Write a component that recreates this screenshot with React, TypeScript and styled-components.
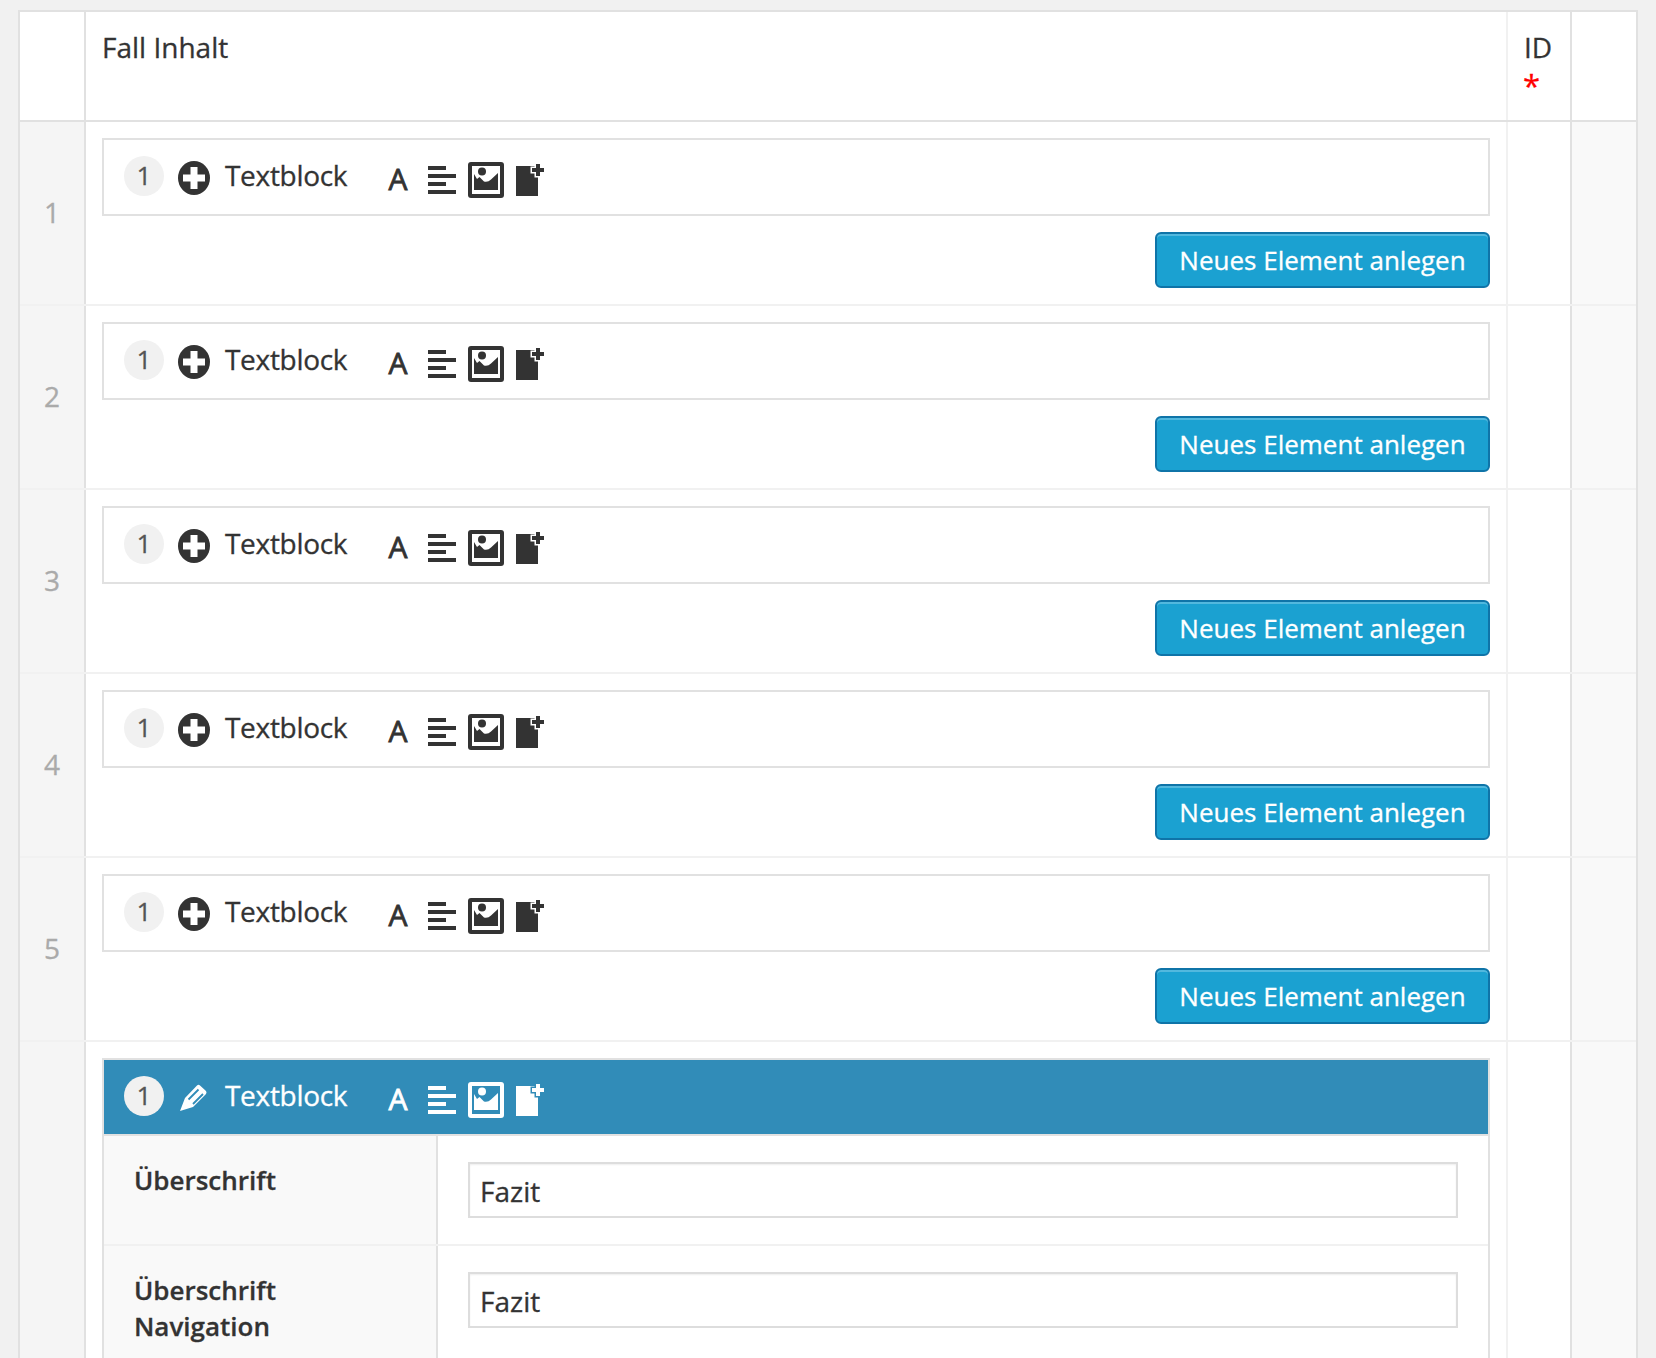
import styled, { createGlobalStyle } from "styled-components";

const rows = [1, 2, 3, 4, 5];

const GlobalStyle = createGlobalStyle`
  html, body {
    margin: 0;
    height: 1358px;
    overflow: hidden;
    background: #f1f1f1;
  }
  body {
    font-family: "Open Sans", "Liberation Sans", sans-serif;
    color: #333;
    -webkit-text-stroke: 0.3px;
  }
  * {
    box-sizing: border-box;
  }
`;

function PlusIcon() {
  return (
    <svg width="32" height="34" viewBox="0 0 32 34">
      <ellipse cx="16" cy="17" rx="16" ry="17" fill="#333" />
      <path d="M12.500 6h7v7.500H27v7h-7.500V28h-7v-7.500H5v-7h7.500z" fill="#fff" />
    </svg>
  );
}

function PencilIcon() {
  return (
    <svg width="32" height="34" viewBox="0 0 32 34">
      <path d="M2 30l5-13L19 4.500q1.500-1.500 3 0l6 5.500q1 1.500 0 3L15 26z" fill="#fff" />
      <path
        d="M10.500 18.500l10-10M15 23l10-10"
        stroke="#318cb8"
        strokeWidth="1.800"
        fill="none"
      />
    </svg>
  );
}

function LinesIcon({ color }: { color: string }) {
  return (
    <svg width="28" height="28" viewBox="0 0 28 28" fill={color}>
      <rect x="0" y="0" width="18" height="4" />
      <rect x="0" y="8" width="28" height="4" />
      <rect x="0" y="16" width="18" height="4" />
      <rect x="0" y="24" width="28" height="4" />
    </svg>
  );
}

function ImageIcon({ color, bg }: { color: string; bg: string }) {
  return (
    <svg width="36" height="36" viewBox="0 0 36 36">
      <rect width="36" height="36" rx="3" fill={color} />
      <rect x="4" y="4" width="28" height="28" fill={bg} />
      <circle cx="14" cy="9.500" r="4" fill={color} />
      <path d="M6 12l3 5 2.500-2 4.500 4.500q4 1 7-2L30 11v17H6z" fill={color} />
    </svg>
  );
}

function NoteIcon({ color, bg }: { color: string; bg: string }) {
  return (
    <svg width="28" height="32" viewBox="0 0 28 32">
      <rect x="0" y="2" width="22" height="30" fill={color} />
      <path
        d="M20 0h4v4h4v4h-4v4h-4V8h-4V4h4z"
        fill={color}
        stroke={bg}
        strokeWidth="3"
        paintOrder="stroke"
      />
    </svg>
  );
}

function BlockHeader({ active }: { active?: boolean }) {
  const color = active ? "#fff" : "#333";
  const bg = active ? "#318cb8" : "#fff";
  return (
    <HeaderBar $active={active}>
      <Count>1</Count>
      <StateIcon>{active ? <PencilIcon /> : <PlusIcon />}</StateIcon>
      <BlockTitle>Textblock</BlockTitle>
      <LetterIcon>A</LetterIcon>
      <Tools>
        <LinesIcon color={color} />
        <ImageIcon color={color} bg={bg} />
        <NoteIcon color={color} bg={bg} />
      </Tools>
    </HeaderBar>
  );
}

export default function App() {
  return (
    <>
      <GlobalStyle />
      <Table>
        <HeadRow>
          <HeadCell $rule="#e1e1e1" />
          <HeadCell $rule="#f1f1f1">Fall Inhalt</HeadCell>
          <HeadCell $rule="#e1e1e1">
            ID
            <Required>*</Required>
          </HeadCell>
          <HeadCell />
        </HeadRow>
        {rows.map((n) => (
          <Row key={n}>
            <NumberCell>{n}</NumberCell>
            <ContentCell>
              <Block>
                <BlockHeader />
              </Block>
              <ButtonRow>
                <AddButton>Neues Element anlegen</AddButton>
              </ButtonRow>
            </ContentCell>
            <IdCell />
            <SideCell />
          </Row>
        ))}
        <Row $last>
          <NumberCell />
          <ContentCell>
            <Block>
              <BlockHeader active />
              <Field>
                <FieldLabel>Überschrift</FieldLabel>
                <FieldValue>
                  <TextInput defaultValue="Fazit" />
                </FieldValue>
              </Field>
              <Field>
                <FieldLabel>
                  Überschrift
                  <br />
                  Navigation
                </FieldLabel>
                <FieldValue>
                  <TextInput defaultValue="Fazit" />
                </FieldValue>
              </Field>
            </Block>
          </ContentCell>
          <IdCell />
          <SideCell />
        </Row>
      </Table>
    </>
  );
}

const Table = styled.div`
  width: 1620px;
  margin: 10px 0 0 18px;
  background: #fff;
  border: 2px solid #e1e1e1;
`;

const HeadRow = styled.div`
  display: grid;
  grid-template-columns: 66px 1422px 64px 64px;
  border-bottom: 2px solid #e1e1e1;
`;

const HeadCell = styled.div<{ $rule?: string }>`
  height: 108px;
  padding: 17px 16px 19px;
  font-size: 28px;
  line-height: 36px;
  color: #333;
  border-right: ${(p) => (p.$rule ? `2px solid ${p.$rule}` : "0")};
`;

const Required = styled.div`
  margin: 2px 0 0 -1px;
  color: #f00;
  font-size: 31px;
`;

const Row = styled.div<{ $last?: boolean }>`
  display: grid;
  grid-template-columns: 66px 1422px 64px 64px;
  border-bottom: ${(p) => (p.$last ? "0" : "2px solid #f1f1f1")};
`;

const NumberCell = styled.div`
  display: flex;
  align-items: center;
  justify-content: center;
  padding-bottom: 2px;
  background: #f5f5f5;
  border-right: 2px solid #e1e1e1;
  font-size: 28px;
  color: #aaa;
`;

const ContentCell = styled.div`
  padding: 16px;
  border-right: 2px solid #f1f1f1;
`;

const IdCell = styled.div`
  border-right: 2px solid #e1e1e1;
`;

const SideCell = styled.div`
  background: #f9f9f9;
`;

const Block = styled.div`
  border: 2px solid #e1e1e1;
`;

const HeaderBar = styled.div<{ $active?: boolean }>`
  display: flex;
  align-items: flex-start;
  height: 74px;
  padding: 16px 0 0 20px;
  background: ${(p) => (p.$active ? "#318cb8" : "#fff")};
  color: ${(p) => (p.$active ? "#fff" : "#333")};
`;

const Count = styled.span`
  flex: none;
  width: 40px;
  height: 40px;
  border-radius: 50%;
  background: #f1f1f1;
  color: #555;
  font-size: 26px;
  line-height: 38px;
  text-align: center;
`;

const StateIcon = styled.span`
  flex: none;
  width: 32px;
  height: 34px;
  margin: 5px 0 0 14px;
  svg {
    display: block;
  }
`;

const BlockTitle = styled.span`
  flex: none;
  width: 122px;
  margin: 1px 0 0 15px;
  font-size: 28px;
  line-height: 36px;
  letter-spacing: -0.3px;
`;

const LetterIcon = styled.span`
  flex: none;
  width: 20px;
  margin: 3px 0 0 41px;
  font-size: 30px;
  font-weight: 400;
  -webkit-text-stroke: 0.8px;
  line-height: 40px;
  text-align: center;
`;

const Tools = styled.span`
  display: flex;
  align-items: center;
  gap: 12px;
  margin: 6px 0 0 20px;
  svg {
    display: block;
  }
`;

const ButtonRow = styled.div`
  display: flex;
  justify-content: flex-end;
  margin-top: 16px;
`;

const AddButton = styled.button`
  height: 56px;
  width: 335px;
  padding: 0;
  border: 2px solid #0f74a8;
  border-radius: 6px;
  background: #1ba1d1;
  box-shadow: inset 0 2px 0 rgba(120, 200, 230, 0.6);
  color: #fff;
  font-family: inherit;
  font-size: 26px;
`;

const Field = styled.div`
  display: grid;
  grid-template-columns: 334px 1fr;
  border-top: 2px solid #e1e1e1;
  & + & {
    border-top-color: #f1f1f1;
  }
`;

const FieldLabel = styled.div`
  padding: 26px 30px;
  background: #f9f9f9;
  border-right: 2px solid #e1e1e1;
  font-size: 26px;
  font-weight: 600;
  line-height: 36px;
`;

const FieldValue = styled.div`
  padding: 26px 30px;
`;

const TextInput = styled.input`
  display: block;
  width: 100%;
  height: 56px;
  padding: 2px 10px 0;
  border: 2px solid #ddd;
  box-shadow: inset 0 1px 2px rgba(0, 0, 0, 0.07);
  background: #fff;
  color: #333;
  font-family: inherit;
  font-size: 28px;
  outline: none;
`;
